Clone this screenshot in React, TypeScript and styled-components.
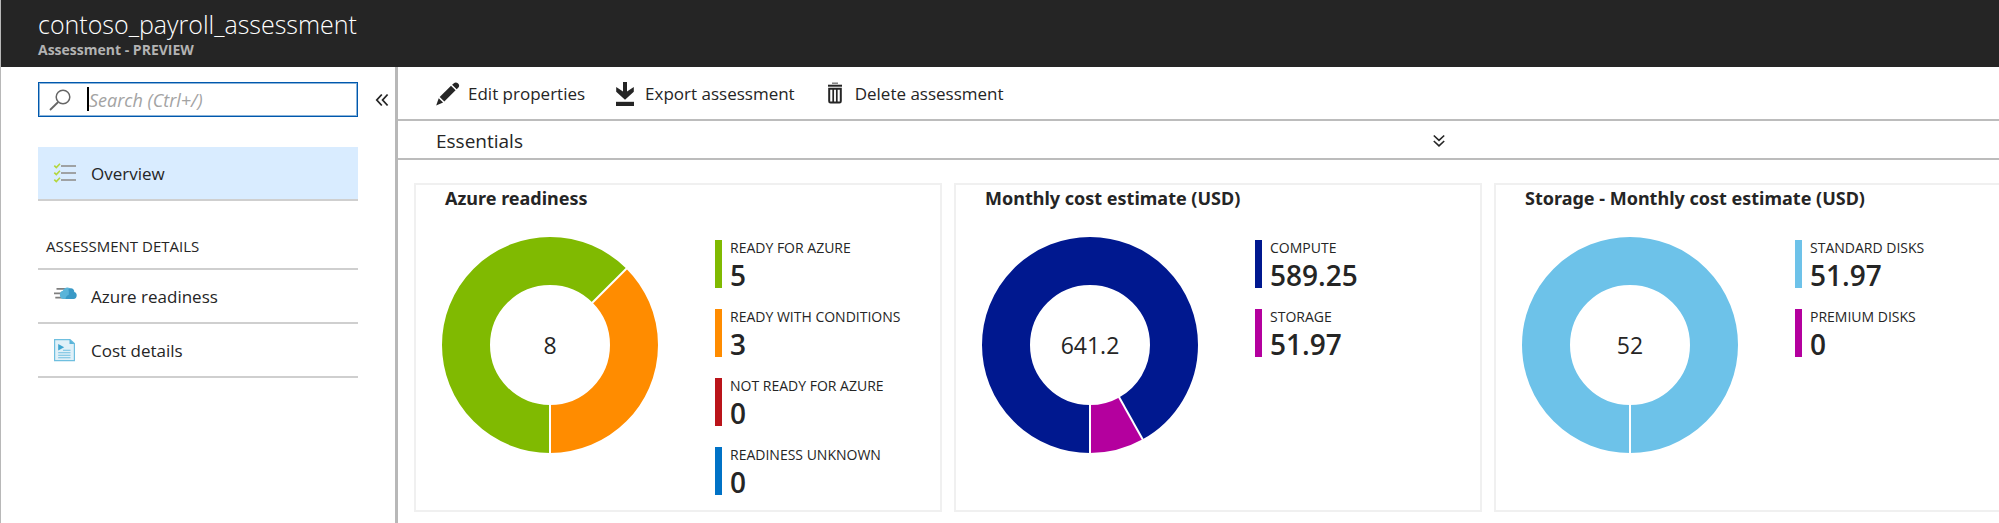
import React from "react";
import styled, { createGlobalStyle } from "styled-components";

const GlobalStyle = createGlobalStyle`
  *, *::before, *::after { box-sizing: border-box; }
  body {
    margin: 0;
    overflow-x: hidden;
    background: #fff;
    color: #252525;
    font-family: "Open Sans", "Noto Sans", sans-serif;
    font-size: 17px;
    line-height: 24px;
  }
  h1, h2, h3, p, ul, dl, dd { margin: 0; padding: 0; }
  button, input { font: inherit; color: inherit; }
`;

const Blade = styled.div`
  display: flex;
  flex-direction: column;
  min-height: 100vh;
  border-left: 1px solid #b8b8b8;
`;

const Header = styled.header`
  padding: 7px 37px 8px;
  background: #252525;
  color: #fff;
`;

const Title = styled.h1`
  font-size: 25px;
  line-height: 34px;
  font-weight: 300;
`;

const Subtitle = styled.p`
  font-size: 14px;
  line-height: 18px;
  font-weight: 700;
  color: #b3b3b3;
`;

const Body = styled.div`
  display: flex;
  flex: 1;
`;

const Sidebar = styled.aside`
  flex: none;
  width: 397px;
  padding: 15px 2px 0 37px;
  border-right: 3px solid #b8b8b8;
`;

const SearchRow = styled.div`
  display: flex;
  align-items: center;
  justify-content: space-between;
`;

const SearchBox = styled.label`
  display: flex;
  align-items: center;
  width: 320px;
  height: 35px;
  padding: 0 10px;
  border: 1px solid #0058ad;
  box-shadow: inset 0 0 0 1px #8ab4da;
`;

const Caret = styled.span`
  flex: none;
  width: 2px;
  height: 24px;
  margin: 0 0 2px 16px;
  background: #000;
`;

const SearchInput = styled.input`
  flex: 1;
  min-width: 0;
  padding: 0;
  border: 0;
  outline: 0;
  background: none;
  font-size: 18px;
  &::placeholder {
    color: #a3a3a3;
    font-style: italic;
    opacity: 1;
  }
`;

const IconButton = styled.button`
  display: flex;
  padding: 4px;
  border: 0;
  background: none;
  cursor: pointer;
`;

const NavList = styled.ul<{ $top?: number }>`
  width: 320px;
  margin-top: ${(p) => p.$top ?? 0}px;
  list-style: none;
`;

const NavLink = styled.a<{ $active?: boolean }>`
  display: flex;
  align-items: center;
  gap: 14px;
  height: 54px;
  padding-left: 15px;
  border-bottom: 2px solid #cfcfcf;
  background: ${(p) => (p.$active ? "#d9ecff" : "transparent")};
  color: inherit;
  text-decoration: none;
`;

const NavLabel = styled.span`
  padding-top: 2px;
`;

const NavHeading = styled.h2`
  width: 320px;
  height: 69px;
  padding: 33px 8px 0;
  border-bottom: 2px solid #cfcfcf;
  font-size: 15px;
  line-height: 24px;
  font-weight: 500;
`;

const Main = styled.main`
  flex: 1;
  min-width: 0;
  overflow: hidden;
`;

const Toolbar = styled.div`
  display: flex;
  align-items: center;
  gap: 28px;
  height: 54px;
  padding: 2px 0 0 38px;
  border-bottom: 2px solid #bcbcbc;
`;

const ToolButton = styled.button`
  display: flex;
  align-items: center;
  gap: 8px;
  padding: 0;
  border: 0;
  background: none;
  cursor: pointer;
`;

const Essentials = styled.div`
  display: flex;
  align-items: center;
  justify-content: space-between;
  height: 39px;
  padding: 2px 550px 0 38px;
  border-bottom: 2px solid #bcbcbc;
  font-size: 19px;
`;

const Tiles = styled.div`
  display: flex;
  gap: 12px;
  padding: 23px 16px 11px;
`;

const Tile = styled.section`
  flex: none;
  width: 528px;
  height: 329px;
  padding: 1px 29px;
  border: 2px solid #f0f0f0;
`;

const TileTitle = styled.h3`
  font-family: "Noto Sans", "Open Sans", sans-serif;
  font-size: 18px;
  line-height: 24px;
  font-weight: 700;
`;

const TileBody = styled.div`
  display: flex;
  align-items: flex-start;
  padding-top: 27px;
`;

const Donut = styled.svg`
  flex: none;
  width: 216px;
  height: 216px;
  margin-left: -3px;
`;

const Legend = styled.dl`
  display: grid;
  gap: 21px;
  margin: 3px 0 0 57px;
`;

const LegendItem = styled.div<{ $color: string }>`
  height: 48px;
  padding-left: 8px;
  border-left: 7px solid ${(p) => p.$color};
  white-space: nowrap;
`;

const LegendLabel = styled.dt`
  font-size: 14px;
  line-height: 16px;
`;

const LegendValue = styled.dd`
  font-size: 28px;
  line-height: 38px;
  font-weight: 600;
`;

type Slice = { label: string; value: number; color: string };

const TILES: { title: string; total: string; slices: Slice[] }[] = [
  {
    title: "Azure readiness",
    total: "8",
    slices: [
      { label: "READY FOR AZURE", value: 5, color: "#80ba01" },
      { label: "READY WITH CONDITIONS", value: 3, color: "#ff8c00" },
      { label: "NOT READY FOR AZURE", value: 0, color: "#ba141a" },
      { label: "READINESS UNKNOWN", value: 0, color: "#0072c6" },
    ],
  },
  {
    title: "Monthly cost estimate (USD)",
    total: "641.2",
    slices: [
      { label: "COMPUTE", value: 589.25, color: "#00188f" },
      { label: "STORAGE", value: 51.97, color: "#b4009e" },
    ],
  },
  {
    title: "Storage - Monthly cost estimate (USD)",
    total: "52",
    slices: [
      { label: "STANDARD DISKS", value: 51.97, color: "#6dc2e9" },
      { label: "PREMIUM DISKS", value: 0, color: "#b4009e" },
    ],
  },
];

/* Ring whose slices start at six o'clock and run clockwise. */
function DonutChart({ slices, total }: { slices: Slice[]; total: string }) {
  const sum = slices.reduce((a, s) => a + s.value, 0);
  const r = 84;
  const length = 2 * Math.PI * r;
  let start = 0;
  const arcs = slices
    .filter((s) => s.value > 0)
    .map((s) => {
      const arc = { color: s.color, from: start / sum, share: s.value / sum };
      start += s.value;
      return arc;
    });
  return (
    <Donut viewBox="0 0 216 216" role="img" aria-label={total}>
      {arcs.map((a) => (
        <circle
          key={a.color}
          cx="108"
          cy="108"
          r={r}
          fill="none"
          stroke={a.color}
          strokeWidth="48"
          strokeDasharray={`${a.share * length} ${length}`}
          transform={`rotate(${90 + a.from * 360} 108 108)`}
        />
      ))}
      {arcs.map((a) => (
        <path
          key={a.color}
          d="M166 108H217"
          stroke="#fff"
          strokeWidth="2"
          transform={`rotate(${90 + a.from * 360} 108 108)`}
        />
      ))}
      <text x="108" y="117" textAnchor="middle" fontSize="23" fontWeight="500" fill="#252525">
        {total}
      </text>
    </Donut>
  );
}

const SearchIcon = () => (
  <svg width="22" height="22" viewBox="0 0 22 22" fill="none" stroke="#666" strokeWidth="1.5">
    <circle cx="14" cy="8" r="6.8" />
    <path d="M9.2 13L1 21" strokeWidth="1.8" />
  </svg>
);

const CollapseIcon = () => (
  <svg width="14" height="14" viewBox="0 0 14 14" fill="none" stroke="#252525" strokeWidth="1.8">
    <path d="M6.8 1.5L1.8 7l5 5.5M12.6 1.5L7.6 7l5 5.5" />
  </svg>
);

const ExpandIcon = () => (
  <svg width="12" height="14" viewBox="0 0 12 14" fill="none" stroke="#252525" strokeWidth="1.6">
    <path d="M.8 1.5L6 6.3l5.2-4.8M.8 7L6 11.8 11.2 7" />
  </svg>
);

const ChecklistIcon = () => (
  <svg width="24" height="22" viewBox="0 0 24 22" fill="none">
    <path d="M8 4h15M8 11h15M8 18h15" stroke="#9fa2a4" strokeWidth="2" />
    <path d="M1.3 3.6l2 2L7 1.8M1.3 10.6l2 2L7 8.8M1.3 17.6l2 2L7 15.8" stroke="#b4d63c" strokeWidth="1.6" />
  </svg>
);

const CloudIcon = () => (
  <svg width="24" height="24" viewBox="0 0 24 24" fill="none">
    <path d="M3.5 4.8H16M1 9.3h12M2.3 13.6H12" stroke="#7f7f7f" strokeWidth="1.7" />
    <path d="M10.5 15a4.2 4.2 0 0 1-.6-8.2c.6-2.8 4.1-4.3 6.9-2.8L19 15z" fill="#59b4d9" />
    <path d="M12.5 15c.2-2.6 2-3.9 3.2-4 .2-2 .4-3.5-.3-5.5C17.5 2.7 21.5 4.5 21.3 8c2 .6 2.4 2 2.4 3.3C23.7 13.5 22.5 15 20.5 15z" fill="#3999c6" />
  </svg>
);

const DocumentIcon = () => (
  <svg width="24" height="24" viewBox="0 0 24 24" fill="none">
    <path d="M1.6 1.6H17l4.4 4v17H1.6z" fill="#e0f0f8" stroke="#6fbfdf" strokeWidth="1.2" />
    <path d="M16.5 1.3v4.7H21.500z" fill="#59b4d9" />
    <path d="M5.2 6l6 3.3-6 3.300z" fill="#3fa5d0" />
    <path d="M10 12.3H17.500M5.200 14.800h12.300M5.200 17.300h12.300M5.200 19.800h12.300" stroke="#6fbfdf" strokeWidth="1.1" />
  </svg>
);

const PencilIcon = () => (
  <svg width="24" height="24" viewBox="0 0 24 24" fill="#252525">
    <path d="M17.6 1.4c1.5-1.5 3.2-1.2 4.5 0s1.5 3 .1 4.4l-1.5 1.4-4.6-4.500z" />
    <path d="M15 3.8l4.6 4.5L8.3 19.6l-4.600-4.500z" />
    <path d="M2.7 16.3l4.4 4.3L.2 23.500z" />
  </svg>
);

const DownloadIcon = () => (
  <svg width="24" height="24" viewBox="-2 0 24 24" fill="#252525">
    <path d="M8 0h4v9.5L18.8 5v4.8L10 17.8 1.2 9.8V5L8 9.500z" />
    <path d="M1 19.8h18V24H1z" />
  </svg>
);

const TrashIcon = () => (
  <svg width="24" height="24" viewBox="-3 0 24 24" fill="none" stroke="#252525">
    <path d="M6 1.2h6" strokeWidth="1.4" stroke="#777" />
    <path d="M2 3.7h14" strokeWidth="2" />
    <path d="M3.2 6.8h11.600V19.2q0 1.300-1.300 1.300H4.500q-1.300 0-1.300-1.300z" strokeWidth="2" />
    <path d="M7.200 7v13M10.800 7v13" strokeWidth="1.700" />
  </svg>
);

export default function App() {
  return (
    <Blade>
      <GlobalStyle />
      <Header>
        <Title>contoso_payroll_assessment</Title>
        <Subtitle>Assessment - PREVIEW</Subtitle>
      </Header>
      <Body>
        <Sidebar>
          <SearchRow>
            <SearchBox>
              <SearchIcon />
              <Caret />
              <SearchInput type="text" aria-label="Search" placeholder="Search (Ctrl+/)" />
            </SearchBox>
            <IconButton type="button" aria-label="Collapse menu">
              <CollapseIcon />
            </IconButton>
          </SearchRow>
          <nav>
            <NavList $top={30}>
              <li>
                <NavLink href="#overview" $active>
                  <ChecklistIcon />
                  <NavLabel>Overview</NavLabel>
                </NavLink>
              </li>
            </NavList>
            <NavHeading>ASSESSMENT DETAILS</NavHeading>
            <NavList>
              <li>
                <NavLink href="#readiness">
                  <CloudIcon />
                  <NavLabel>Azure readiness</NavLabel>
                </NavLink>
              </li>
              <li>
                <NavLink href="#cost">
                  <DocumentIcon />
                  <NavLabel>Cost details</NavLabel>
                </NavLink>
              </li>
            </NavList>
          </nav>
        </Sidebar>
        <Main>
          <Toolbar>
            <ToolButton type="button">
              <PencilIcon />
              Edit properties
            </ToolButton>
            <ToolButton type="button">
              <DownloadIcon />
              Export assessment
            </ToolButton>
            <ToolButton type="button">
              <TrashIcon />
              Delete assessment
            </ToolButton>
          </Toolbar>
          <Essentials>
            Essentials
            <IconButton type="button" aria-label="Expand essentials">
              <ExpandIcon />
            </IconButton>
          </Essentials>
          <Tiles>
            {TILES.map((tile) => (
              <Tile key={tile.title}>
                <TileTitle>{tile.title}</TileTitle>
                <TileBody>
                  <DonutChart slices={tile.slices} total={tile.total} />
                  <Legend>
                    {tile.slices.map((s) => (
                      <LegendItem key={s.label} $color={s.color}>
                        <LegendLabel>{s.label}</LegendLabel>
                        <LegendValue>{s.value}</LegendValue>
                      </LegendItem>
                    ))}
                  </Legend>
                </TileBody>
              </Tile>
            ))}
          </Tiles>
        </Main>
      </Body>
    </Blade>
  );
}
